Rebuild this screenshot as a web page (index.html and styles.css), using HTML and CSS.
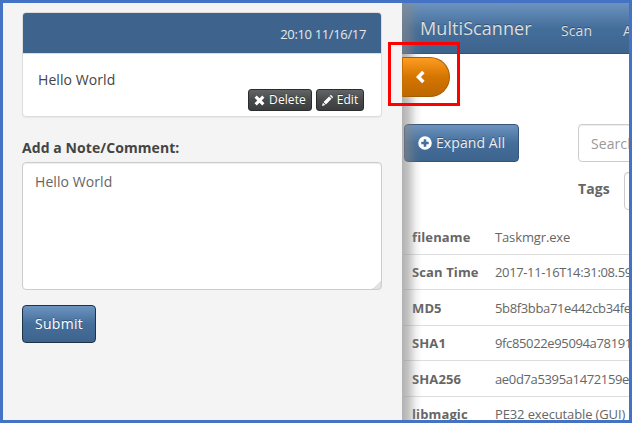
FILE: index.html
```html
<!DOCTYPE html>
<html lang="en">
<head>
<meta charset="utf-8">
<title>MultiScanner</title>
<link rel="stylesheet" href="styles.css">
</head>
<body>
<div class="frame">
  <aside class="sidebar">
    <section class="note">
      <header class="note-head">20:10 11/16/17</header>
      <div class="note-body">
        <p class="note-text">Hello World</p>
        <div class="note-actions">
          <button class="btn btn-dark"><svg class="icon-sm" viewBox="0 0 12 12"><path d="M3 .6 6 3.6 9 .6 11.4 3 8.4 6 11.4 9 9 11.4 6 8.4 3 11.4.6 9 3.6 6 .6 3z"/></svg><span>Delete</span></button>
          <button class="btn btn-dark"><svg class="icon-sm" viewBox="0 0 12 12"><path d="M0 12 1 8.4 3.6 11zM1.7 7.7 7.8 1.6 10.4 4.2 4.3 10.3zM8.5.9 9.1.3Q9.6-.2 10.2.3L11.7 1.8Q12.2 2.4 11.7 2.9L11.1 3.5z"/></svg><span>Edit</span></button>
        </div>
      </div>
    </section>
    <form class="comment">
      <label class="comment-label" for="comment">Add a Note/Comment:</label>
      <textarea class="control comment-input" id="comment">Hello World</textarea>
      <button class="btn btn-primary submit" type="button">Submit</button>
    </form>
  </aside>
  <main class="main">
    <nav class="navbar">
      <a class="brand">MultiScanner</a>
      <a class="nav-link">Scan</a>
      <a class="nav-link">Analyses</a>
    </nav>
    <div class="toolbar">
      <button class="btn btn-primary expand"><svg class="icon" viewBox="0 0 14 14"><path fill-rule="evenodd" d="M7 .2a6.8 6.8 0 1 1 0 13.6A6.8 6.8 0 0 1 7 .2zM5.7 3.3v2.4H3.3v2.6h2.4v2.4h2.6V8.3h2.4V5.7H8.3V3.3z"/></svg><span>Expand All</span></button>
      <div class="filters">
        <input class="control search" placeholder="Search">
        <div class="tags"><label class="tags-label" for="tags">Tags</label><input class="control tags-input" id="tags"></div>
      </div>
    </div>
    <table class="report">
      <tr><th>filename</th><td>Taskmgr.exe</td></tr>
      <tr><th>Scan Time</th><td class="numeric">2017-11-16T14:31:08.590</td></tr>
      <tr><th>MD5</th><td class="numeric">5b8f3bba71e442cb34fe</td></tr>
      <tr><th>SHA1</th><td class="numeric">9fc85022e95094a78191</td></tr>
      <tr><th>SHA256</th><td class="numeric">ae0d7a5395a1472159e</td></tr>
      <tr><th>libmagic</th><td>PE32 executable (GUI)</td></tr>
    </table>
    <div class="shade"></div>
    <button class="toggle"><svg class="icon-toggle" viewBox="0 0 9 14"><path d="M6.1.7 8.6 3.2 4.9 7 8.6 10.8 6.1 13.3 0 7z"/></svg></button>
  </main>
  <div class="highlight"></div>
</div>
</body>
</html>
```

FILE: styles.css
```css
* { box-sizing: border-box; }

body {
  margin: 0;
  background: #fff;
  color: #444;
  font: 14px/20px "Open Sans", "Noto Sans", sans-serif;
  letter-spacing: .08px;
}

.frame {
  position: relative;
  display: flex;
  width: 632px;
  height: 423px;
  border: 3px solid #4472c4;
  overflow: hidden;
}

.sidebar {
  flex: 0 0 399px;
  padding: 9px 20px 0 19px;
  background: #f4f4f4;
}

.note {
  height: 105px;
  border: 1px solid #ddd;
  border-radius: 4px;
  background: #fff;
  box-shadow: 0 1px 1px rgba(0, 0, 0, .05);
  overflow: hidden;
}

.note-head {
  height: 41px;
  padding: 11px 15px 0 0;
  border-bottom: 1px solid #ddd;
  background: #3e648d;
  color: #e8e8e8;
  font-size: 13px;
  letter-spacing: -.35px;
  line-height: 20px;
  text-align: right;
}

.note-body { padding: 16px 17px 0 15px; }
.note-text { margin: 0 0 -1px; }
.note-actions { display: flex; justify-content: flex-end; gap: 4px; }

.btn {
  display: flex;
  align-items: center;
  justify-content: center;
  padding: 0;
  border-radius: 4px;
  color: #fff;
  font: inherit;
  letter-spacing: .1px;
  white-space: nowrap;
  text-shadow: 0 -1px 0 rgba(0, 0, 0, .3);
}

.btn svg, .toggle svg { fill: #fff; overflow: visible; }

.btn-dark {
  width: 48px;
  height: 22px;
  gap: 4px;
  border: 1px solid #2c2c2c;
  border-radius: 3px;
  background: linear-gradient(#626566, #484b4b 50%, #3b3e3e);
  font-size: 12px;
}

.btn-dark:first-child { width: 64px; }
.icon-sm { width: 11px; height: 11px; }

.btn-primary {
  height: 38px;
  border: 1px solid #1f3348;
  background: linear-gradient(#6d94bf, #446e9b 50%, #3e648d);
}

.comment-label {
  display: block;
  margin: 21px 0 4px;
  font-weight: 700;
}

.control {
  display: block;
  border: 1px solid #ccc;
  border-radius: 4px;
  background: #fff;
  color: #666;
  font: inherit;
  letter-spacing: .08px;
  box-shadow: inset 0 1px 1px rgba(0, 0, 0, .075);
}

.comment-input {
  width: 360px;
  height: 128px;
  margin-bottom: 15px;
  padding: 9px 12px;
  background: #fff linear-gradient(135deg, transparent 50%, #e2e2e2 50%) right bottom / 9px 9px no-repeat;
  resize: none;
}

.submit { width: 74px; letter-spacing: .3px; }

.main {
  position: relative;
  flex: 0 0 227px;
  overflow: hidden;
}

.navbar {
  display: flex;
  width: 500px;
  height: 51px;
  padding-left: 18px;
  border-bottom: 1px solid #345578;
  background: linear-gradient(#6d94bf, #446e9b 50%, #3e648d);
  color: #ddd;
  text-shadow: 0 -1px 0 rgba(0, 0, 0, .3);
}

.brand { width: 126px; font-size: 18px; line-height: 51px; }
.nav-link { padding: 18px 16px 0 15px; line-height: 20px; }

.toolbar {
  display: flex;
  width: 500px;
  height: 162px;
  padding: 70px 0 0 2px;
}

.expand { width: 115px; gap: 4px; border-color: #345578; color: #eee; }
.icon { width: 14px; height: 14px; margin-top: -1px; }
.filters { margin-left: 59px; }
.search { width: 200px; height: 38px; padding: 8px 12px; }
.search::placeholder { color: #999; opacity: 1; }
.tags { display: flex; margin-top: 10px; }
.tags-label { width: 46px; padding-top: 7px; color: #666; font-weight: 700; }
.tags-input { width: 150px; height: 38px; }

.report {
  width: 400px;
  margin: 3px 0 0 2px;
  border-collapse: collapse;
  color: #666;
  font-size: 13px;
  line-height: 18.57px;
  table-layout: fixed;
}

.report th, .report td { padding: 8.7px 8px 7.3px; text-align: left; white-space: nowrap; }
.report th { width: 83px; letter-spacing: .12px; }
.report td { letter-spacing: -.13px; }
.report .numeric { letter-spacing: -.36px; }
.report tr + tr { border-top: 1px solid #ddd; }

.shade {
  position: absolute;
  inset: 0 auto 0 0;
  width: 20px;
  background: linear-gradient(90deg, rgba(136, 136, 136, .65), rgba(136, 136, 136, .5) 30%, rgba(136, 136, 136, .12) 70%, transparent);
}

.toggle {
  position: absolute;
  top: 54px;
  left: 0;
  width: 48px;
  height: 40px;
  padding: 0 11px 0 0;
  border: 1px solid #a65c00;
  border-left-color: #c46d00;
  border-radius: 0 20px 20px 0;
  background: linear-gradient(#ff9c21, #d47500 50%, #bd6800);
}

.icon-toggle { display: block; width: 9px; height: 14px; margin: 0 auto; }

.highlight {
  position: absolute;
  top: 39px;
  left: 385px;
  width: 72px;
  height: 64px;
  border: 3px solid #f00;
}
```
